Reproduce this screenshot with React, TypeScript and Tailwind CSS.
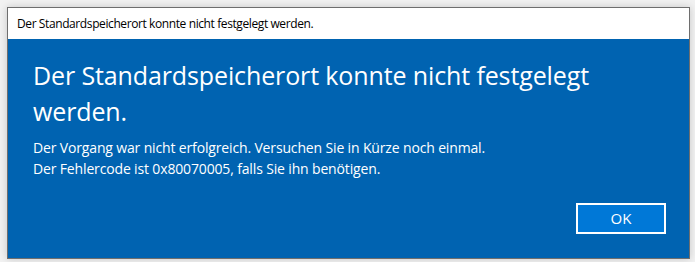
import React from "react";

export default function App() {
  return (
    <div className="w-[695px] h-[262px] bg-[#f2f2f2] pt-[7px] pl-[7px] overflow-hidden" style={{ fontFamily: '"Open Sans", "Noto Sans", sans-serif' }}>
      <div className="w-[683px] h-[252px] border border-[#6e6e6e] flex flex-col shadow-[0_0_8px_rgba(0,0,0,0.18)]">
        <div className="h-[31px] bg-white flex items-center pl-[9px] text-[12px] text-black tracking-[-0.4px]">
          Der Standardspeicherort konnte nicht festgelegt werden.
        </div>
        <div className="flex-1 bg-[#0063b1] text-white flex flex-col pl-[25px] pr-[23px]">
          <div className="mt-[18px] text-[25px] leading-[36px] tracking-[-0.12px]">
            Der Standardspeicherort konnte nicht festgelegt werden.
          </div>
          <div className="mt-[8px] text-[14px] leading-[21px] tracking-[-0.15px]">
            <div>Der Vorgang war nicht erfolgreich. Versuchen Sie in Kürze noch einmal.</div>
            <div>Der Fehlercode ist 0x80070005, falls Sie ihn benötigen.</div>
          </div>
          <div className="flex-1" />
          <div className="flex justify-end mb-[24px]">
            <button className="w-[90px] h-[31px] border-2 border-white bg-[#0078d7] text-white text-[15px] flex items-center justify-center">
              OK
            </button>
          </div>
        </div>
      </div>
    </div>
  );
}
